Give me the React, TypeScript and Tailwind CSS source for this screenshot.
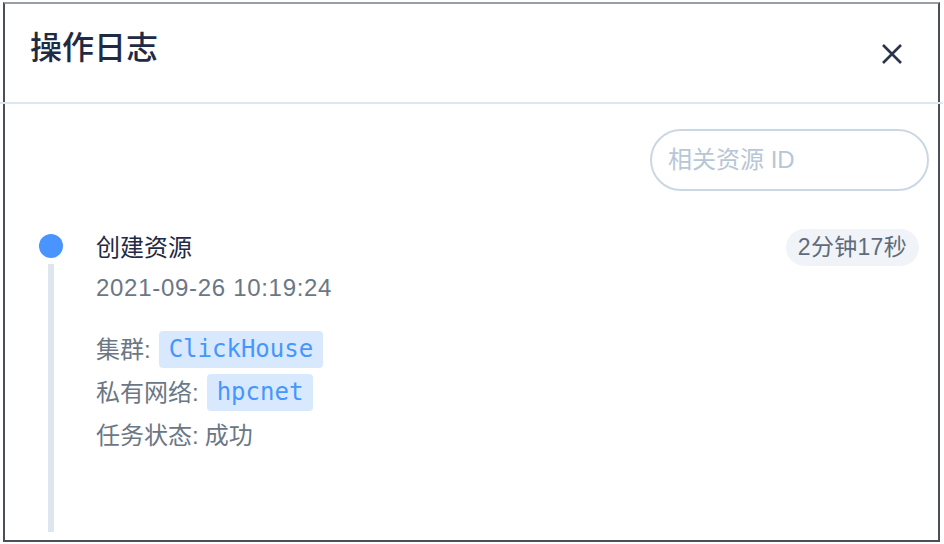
import React from 'react';

const sans = '"Liberation Sans", "Noto Sans CJK SC", sans-serif';

const details = [
  { label: '集群:', tag: 'ClickHouse' },
  { label: '私有网络:', tag: 'hpcnet' },
  { label: '任务状态:', text: '成功' },
];

const CloseIcon = () => (
  <svg width="22" height="22" viewBox="0 0 22 22" fill="none">
    <path d="M2 2L20 20M20 2L2 20" stroke="#2a344d" strokeWidth="2.6" />
  </svg>
);

export default function App() {
  return (
    <div className="w-[944px] h-[544px] bg-white pt-[2px] pl-[3px]" style={{ fontFamily: sans }}>
      <div className="w-[937px] h-[540px] border-2 border-[#4b4f5b] border-t-[#9a9ea6] bg-white flex flex-col">
        {/* Header */}
        <div className="h-[98px] flex items-start justify-between pl-[25px] pr-[35px]">
          <h1 className="mt-[23px] text-[32px] leading-[42px] font-medium text-[#1f2a44]">操作日志</h1>
          <button className="mt-[39px]">
            <CloseIcon />
          </button>
        </div>
        <div className="h-[2px] bg-[#dde7ef] -mx-[5px]" />

        {/* Body */}
        <div className="flex-1 flex flex-col pt-[25px] pb-[8px] pl-[34px] pr-[19px]">
          <div className="flex justify-end">
            <div className="-mr-[10px] w-[279px] h-[62px] rounded-full border-2 border-[#cbd7e3] flex items-center pl-[16px] text-[24px] text-[#b8c6d6]">
              相关资源 ID
            </div>
          </div>

          <div className="mt-[38px] flex-1 flex">
            <div className="w-[24px] flex flex-col items-center pt-[5px]">
              <div className="w-[24px] h-[24px] rounded-full bg-[#4a94ff]" />
              <div className="mt-[6px] w-[6px] flex-1 bg-[#dde6ee]" />
            </div>
            <div className="flex-1 ml-[33px]">
              <div className="h-[37px] flex items-center justify-between">
                <span className="text-[24px] text-[#1f2a44]">创建资源</span>
                <span className="h-[37px] px-[12px] rounded-full bg-[#f0f3f8] text-[23px] leading-[37px] tracking-[0.3px] text-[#5f6b7a]">
                  2分钟17秒
                </span>
              </div>
              <div className="mt-[5px] text-[24px] leading-[34px] tracking-[0.7px] text-[#6b7785]">2021-09-26 10:19:24</div>
              <div className="mt-[26px] flex flex-col gap-[6px]">
                {details.map((d) => (
                  <div key={d.label} className="h-[37px] flex items-center text-[24px] text-[#6b7785]">
                    <span>{d.label}</span>
                    {d.tag ? (
                      <span
                        className="ml-[8px] h-[37px] px-[10px] rounded-[4px] bg-[#d9e9fd] text-[#4596ff] text-[24px] leading-[37px]"
                        style={{ fontFamily: '"DejaVu Sans Mono", monospace' }}
                      >
                        {d.tag}
                      </span>
                    ) : (
                      <span className="ml-[6px]">{d.text}</span>
                    )}
                  </div>
                ))}
              </div>
            </div>
          </div>
        </div>
      </div>
    </div>
  );
}
